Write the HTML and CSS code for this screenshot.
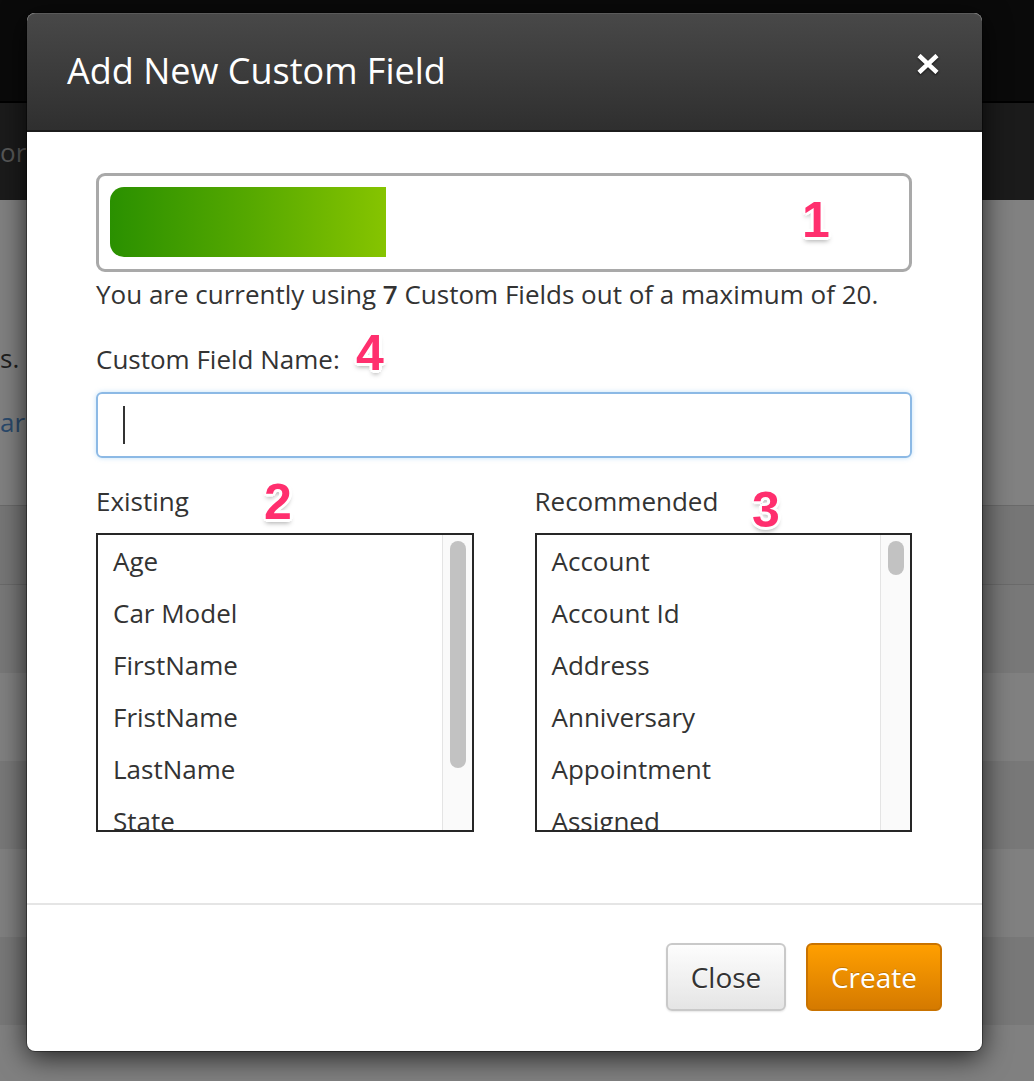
FILE: index.html
```html
<!DOCTYPE html>
<html lang="en">
<head>
<meta charset="utf-8">
<title>Add New Custom Field</title>
<link rel="stylesheet" href="styles.css">
</head>
<body>
<div class="page">
  <div class="topbar"></div>
  <div class="subbar"><span class="subbar-text">or l</span></div>
  <div class="content">
    <p class="bg-text">s.</p>
    <p class="bg-link">ar</p>
  </div>
  <div class="table">
    <div class="thead"></div>
    <div class="row row-alt"></div>
    <div class="row"></div>
    <div class="row row-alt"></div>
    <div class="row"></div>
    <div class="row row-alt"></div>
    <div class="row"></div>
  </div>
</div>

<div class="modal">
  <div class="modal-header">
    <h1 class="modal-title">Add New Custom Field</h1>
    <button class="close-x" aria-label="Close">
      <svg width="22" height="20" viewBox="0 0 22 20"><path d="M2 1.5 L20 18.5 M20 1.5 L2 18.5" stroke="#fff" stroke-width="4.5" fill="none"/></svg>
    </button>
  </div>
  <div class="modal-body">
    <div class="usage"><div class="usage-fill" style="width:35%"></div></div>
    <p class="usage-text">You are currently using <b>7</b> Custom Fields out of a maximum of 20.</p>
    <label class="field-label">Custom Field Name:</label>
    <div class="name-input"><span class="caret"></span></div>
    <div class="lists">
      <div class="list-col">
        <div class="list-title">Existing</div>
        <div class="listbox">
          <ul class="list-items">
            <li>Age</li>
            <li>Car Model</li>
            <li>FirstName</li>
            <li>FristName</li>
            <li>LastName</li>
            <li>State</li>
          </ul>
          <div class="scroll"><div class="thumb thumb-long"></div></div>
        </div>
      </div>
      <div class="list-col">
        <div class="list-title">Recommended</div>
        <div class="listbox">
          <ul class="list-items">
            <li>Account</li>
            <li>Account Id</li>
            <li>Address</li>
            <li>Anniversary</li>
            <li>Appointment</li>
            <li>Assigned</li>
          </ul>
          <div class="scroll"><div class="thumb thumb-short"></div></div>
        </div>
      </div>
    </div>
  </div>
  <div class="modal-footer">
    <button class="btn btn-default">Close</button>
    <button class="btn btn-primary">Create</button>
  </div>
  <span class="note note-1">1</span>
  <span class="note note-2">2</span>
  <span class="note note-3">3</span>
  <span class="note note-4">4</span>
</div>
</body>
</html>
```
FILE: styles.css
```css
html, body {
  margin: 0;
  padding: 0;
}
body {
  width: 1034px;
  height: 1081px;
  overflow: hidden;
  position: relative;
  background: #808080;
  font-family: "Open Sans", "Liberation Sans", sans-serif;
}

/* dimmed page behind the modal */
.page {
  display: flex;
  flex-direction: column;
}
.topbar {
  height: 101px;
  background: #0a0a0a;
  border-bottom: 2px solid #000;
}
.subbar {
  height: 97px;
  background: #1b1b1b;
  display: flex;
  align-items: center;
  overflow: hidden;
}
.subbar-text {
  margin-left: 0;
  color: #585858;
  font-size: 26px;
  white-space: nowrap;
}
.content {
  height: 305px;
  background: #818181;
  overflow: hidden;
  box-sizing: border-box;
  padding-top: 140px;
}
.bg-text, .bg-link {
  margin: 0;
  font-size: 26px;
  line-height: 36px;
  white-space: nowrap;
}
.bg-text {
  color: #1e1e1e;
}
.bg-link {
  margin-top: 28px;
  color: #2b4a6c;
}
.table {
  display: flex;
  flex-direction: column;
}
.thead {
  height: 78px;
  background: #767676;
  border-top: 1px solid #6a6a6a;
  border-bottom: 1px solid #6a6a6a;
}
.row {
  height: 88px;
  background: #808080;
}
.row-alt {
  background: #787878;
}

/* modal */
.modal {
  position: absolute;
  left: 27px;
  top: 13px;
  width: 955px;
  background: #fff;
  border-radius: 8px;
  box-shadow: 0 6px 28px rgba(0, 0, 0, 0.75), 0 0 0 1px rgba(0, 0, 0, 0.35);
  display: flex;
  flex-direction: column;
}
.modal-header {
  height: 119px;
  box-sizing: border-box;
  padding: 37px 43px 0 40px;
  display: flex;
  justify-content: space-between;
  align-items: flex-start;
  background: linear-gradient(#484848, #2f2f2f);
  border-radius: 8px 8px 0 0;
  border-top: 1px solid #5a5a5a;
  border-bottom: 2px solid #1c1c1c;
}
.modal-title {
  margin: 0;
  color: #fff;
  font-size: 36px;
  font-weight: 400;
  line-height: 40px;
}
.close-x {
  margin-top: 3px;
  padding: 0;
  border: 0;
  background: none;
  line-height: 0;
  filter: drop-shadow(0 1px 1px rgba(0, 0, 0, 0.7));
}

.modal-body {
  padding: 41px 70px 71px 69px;
  display: flex;
  flex-direction: column;
  color: #333;
}
.usage {
  height: 99px;
  box-sizing: border-box;
  border: 3px solid #a9a9a9;
  border-radius: 9px;
  padding: 11px 11px 12px;
}
.usage-fill {
  height: 70px;
  border-radius: 14px 0 0 14px;
  background: linear-gradient(to right, #2a9000, #55a800 50%, #86c400);
}
.usage-text {
  margin: 5px 0 0;
  font-size: 26px;
  line-height: 34px;
}
.usage-text b {
  font-weight: 600;
}
.field-label {
  margin-top: 31px;
  font-size: 26px;
  line-height: 34px;
}
.name-input {
  margin-top: 16px;
  height: 66px;
  box-sizing: border-box;
  border: 2px solid #8cb9e5;
  border-radius: 6px;
  box-shadow: 0 0 5px rgba(82, 168, 236, 0.35);
  padding-left: 25px;
  display: flex;
  align-items: center;
}
.caret {
  width: 2px;
  height: 38px;
  background: #333;
}
.lists {
  margin-top: 26px;
  display: grid;
  grid-template-columns: 1fr 1fr;
  column-gap: 61px;
}
.list-title {
  font-size: 26px;
  line-height: 34px;
  margin-bottom: 15px;
}
.listbox {
  height: 299px;
  box-sizing: border-box;
  border: 2px solid #262626;
  display: flex;
  overflow: hidden;
}
.list-items {
  flex: 1;
  margin: 0;
  padding: 0;
  list-style: none;
  overflow: hidden;
}
.list-items li {
  height: 52px;
  line-height: 52px;
  padding-left: 15px;
  font-size: 26px;
  white-space: nowrap;
}
.scroll {
  width: 30px;
  box-sizing: border-box;
  background: #fafafa;
  border-left: 1px solid #e4e4e4;
  padding: 6px 6px 0 7px;
}
.thumb {
  background: #c2c2c2;
  border-radius: 8px;
}
.thumb-long {
  height: 227px;
}
.thumb-short {
  height: 34px;
}

.modal-footer {
  border-top: 2px solid #e5e5e5;
  padding: 38px 40px 40px;
  display: flex;
  justify-content: flex-end;
  gap: 20px;
}
.btn {
  height: 68px;
  box-sizing: border-box;
  border-radius: 6px;
  font-family: "Open Sans", "Liberation Sans", sans-serif;
  font-size: 28px;
  padding: 0;
  cursor: pointer;
}
.btn-default {
  width: 120px;
  border: 2px solid #c9c9c9;
  background: linear-gradient(#fdfdfd, #e5e5e5);
  color: #333;
  text-shadow: 0 1px 0 #fff;
  box-shadow: 0 1px 2px rgba(0, 0, 0, 0.1);
}
.btn-primary {
  width: 136px;
  border: 2px solid #c97300;
  background: linear-gradient(#ff9f00, #d57a00);
  color: #fff;
  text-shadow: 0 -1px 0 rgba(0, 0, 0, 0.2);
}

/* screenshot annotations */
.note {
  position: absolute;
  font-family: "Liberation Sans", "DejaVu Sans", sans-serif;
  font-weight: 700;
  font-size: 50px;
  line-height: 1;
  color: #ff2f6e;
  text-shadow:
    -3px 0 0 #fff, 3px 0 0 #fff, 0 -3px 0 #fff, 0 3px 0 #fff,
    -2px -2px 0 #fff, 2px -2px 0 #fff, -2px 2px 0 #fff, 2px 2px 0 #fff,
    0 4px 5px rgba(0, 0, 0, 0.35);
}
.note-1 { left: 775px; top: 182px; }
.note-2 { left: 237px; top: 464px; }
.note-3 { left: 725px; top: 472px; }
.note-4 { left: 329px; top: 315px; }
```
